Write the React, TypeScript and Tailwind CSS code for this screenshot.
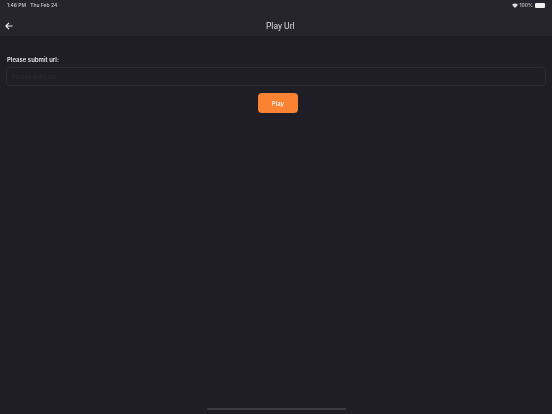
import React from "react";

export default function App() {
  return (
    <div className="w-[552px] h-[414px] overflow-hidden relative flex flex-col bg-[#1f1e26] text-white font-['Roboto','Liberation_Sans',sans-serif]">
      <div className="h-[36px] bg-[#26252d] flex flex-col shrink-0">
        <div className="h-[10px] px-[7px] flex items-center justify-between text-[5px] text-[#c9c9cc] font-medium leading-none [will-change:transform]">
          <div className="flex gap-[4px] font-['Inter',sans-serif]">
            <span>1:46 PM</span>
            <span>Thu Feb 24</span>
          </div>
          <div className="flex items-center gap-[2px] font-['Inter',sans-serif]">
            <svg width="6" height="5" viewBox="0 0 24 20" fill="#e0e0e2">
              <path d="M12 20 L0 7 C7 0 17 0 24 7 Z" />
            </svg>
            <span>100%</span>
            <div className="w-[10px] h-[5px] bg-[#f0f0f2] rounded-[1px]" />
          </div>
        </div>
        <div className="relative flex-1 flex items-center justify-center">
          <svg className="absolute left-[5px] top-[12px]" width="8" height="8" viewBox="0 0 18 18" fill="none" stroke="#f2f2f4" strokeWidth="2.6">
            <path d="M17 9H2M9 2L2 9l7 7" />
          </svg>
          <span className="text-[8.5px] text-[#dcdcdf] mt-[6px] ml-[9px] leading-none [will-change:transform]">Play Url</span>
        </div>
      </div>
      <div className="flex-1 flex flex-col px-[6px] pt-[19px]">
        <div className="text-[6px] font-semibold text-[#e4e4e6] leading-[9px] ml-[1px] font-['Inter',sans-serif] [will-change:transform]">Please submit url:</div>
        <div className="mt-[3px] h-[19px] border border-[#2c2b34] rounded-[3px] flex items-center px-[5px]">
          <span className="text-[6px] text-[#2f2e37] leading-none font-['Inter',sans-serif] [will-change:transform]">Please write url</span>
        </div>
        <button className="mt-[7px] self-center w-[40px] h-[20px] ml-[4px] rounded-[4px] bg-[#fb8232] text-[6px] font-semibold text-[#f5eee8] font-['Inter',sans-serif]">
          <span className="block [will-change:transform]">Play</span>
        </button>
      </div>
      <div className="absolute left-[207px] bottom-[4px] w-[139px] h-[2px] rounded-full bg-[#3c3c42]" />
    </div>
  );
}
